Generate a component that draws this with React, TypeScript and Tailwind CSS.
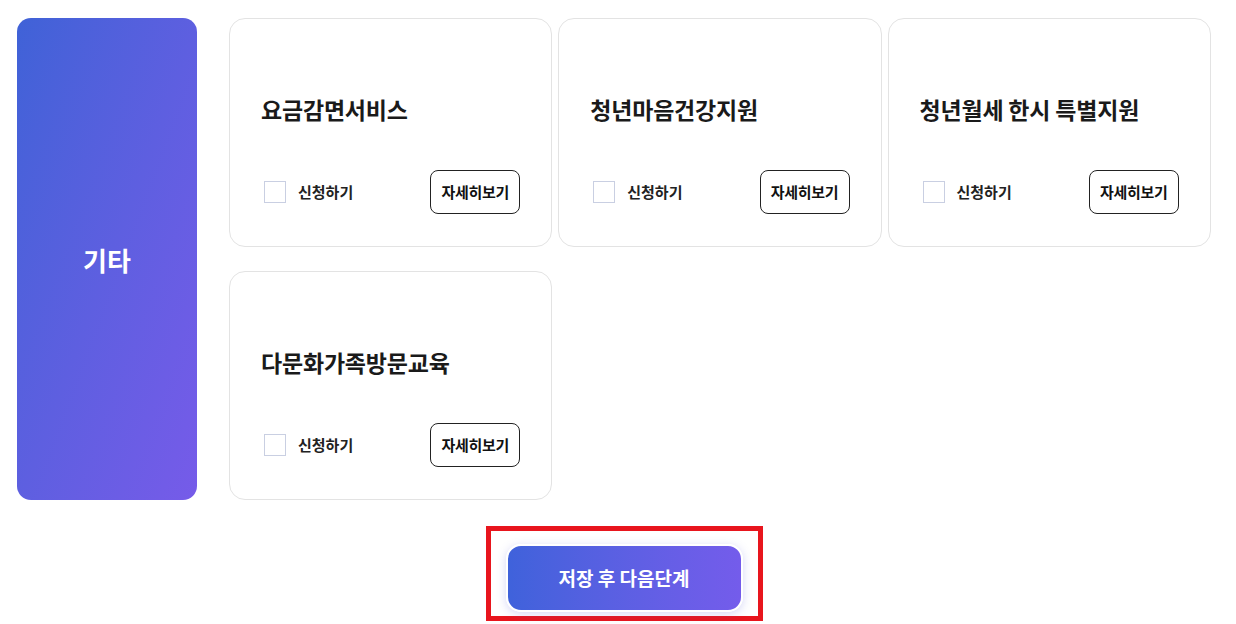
import React from "react";

const services = ["요금감면서비스", "청년마음건강지원", "청년월세 한시 특별지원", "다문화가족방문교육"];

function ServiceCard({ title }: { title: string }) {
  return (
    <div className="flex h-[229px] flex-col rounded-[16px] border border-[#e3e3e3] bg-white px-[31px] pt-[74px] pb-[34px]">
      <h3 className="h-[32px] text-[23px] leading-[32px] font-bold tracking-[-0.2px] text-[#1a1a1a]">{title}</h3>
      <div className="mt-[45px] flex h-[44px] items-center justify-between">
        <label className="flex items-center">
          <span className="ml-[3px] h-[22px] w-[22px] border border-[#c9cfe2] bg-white" />
          <span className="ml-[12px] text-[15px] font-semibold text-[#222]">신청하기</span>
        </label>
        <button className="h-[44px] w-[90px] rounded-[8px] border border-[#222] bg-white text-[15px] font-semibold tracking-[-0.3px] text-[#111]">
          자세히보기
        </button>
      </div>
    </div>
  );
}

export default function App() {
  return (
    <div
      className="min-h-[624px] bg-white pt-[18px] pl-[17px]"
      style={{ fontFamily: '"Noto Sans CJK KR", "Noto Sans", sans-serif' }}
    >
      <div className="flex gap-[32px]">
        {/* Category */}
        <div className="flex h-[482px] w-[180px] shrink-0 items-center justify-center rounded-[14px] bg-gradient-to-br from-[#3f62d7] to-[#765be9]">
          <span className="text-[26px] font-bold text-white">기타</span>
        </div>

        {/* Cards */}
        <div className="grid w-[982px] grid-cols-[323.25px_323.25px_323.25px] gap-x-[6px] gap-y-[24px] self-start">
          {services.map((s) => (
            <ServiceCard key={s} title={s} />
          ))}
        </div>
      </div>

      {/* Save */}
      <div className="mt-[26px] flex justify-center pr-[5px]">
        <div className="border-[5px] border-[#e8151d] px-[15px] pt-[13px] pb-[4px]">
          <button className="h-[68px] w-[237px] rounded-[15px] border-2 border-white bg-gradient-to-r from-[#3f62db] to-[#745ceb] text-[19px] font-bold text-white shadow-[0_2px_10px_rgba(90,95,220,0.25)]">
            저장 후 다음단계
          </button>
        </div>
      </div>
    </div>
  );
}
